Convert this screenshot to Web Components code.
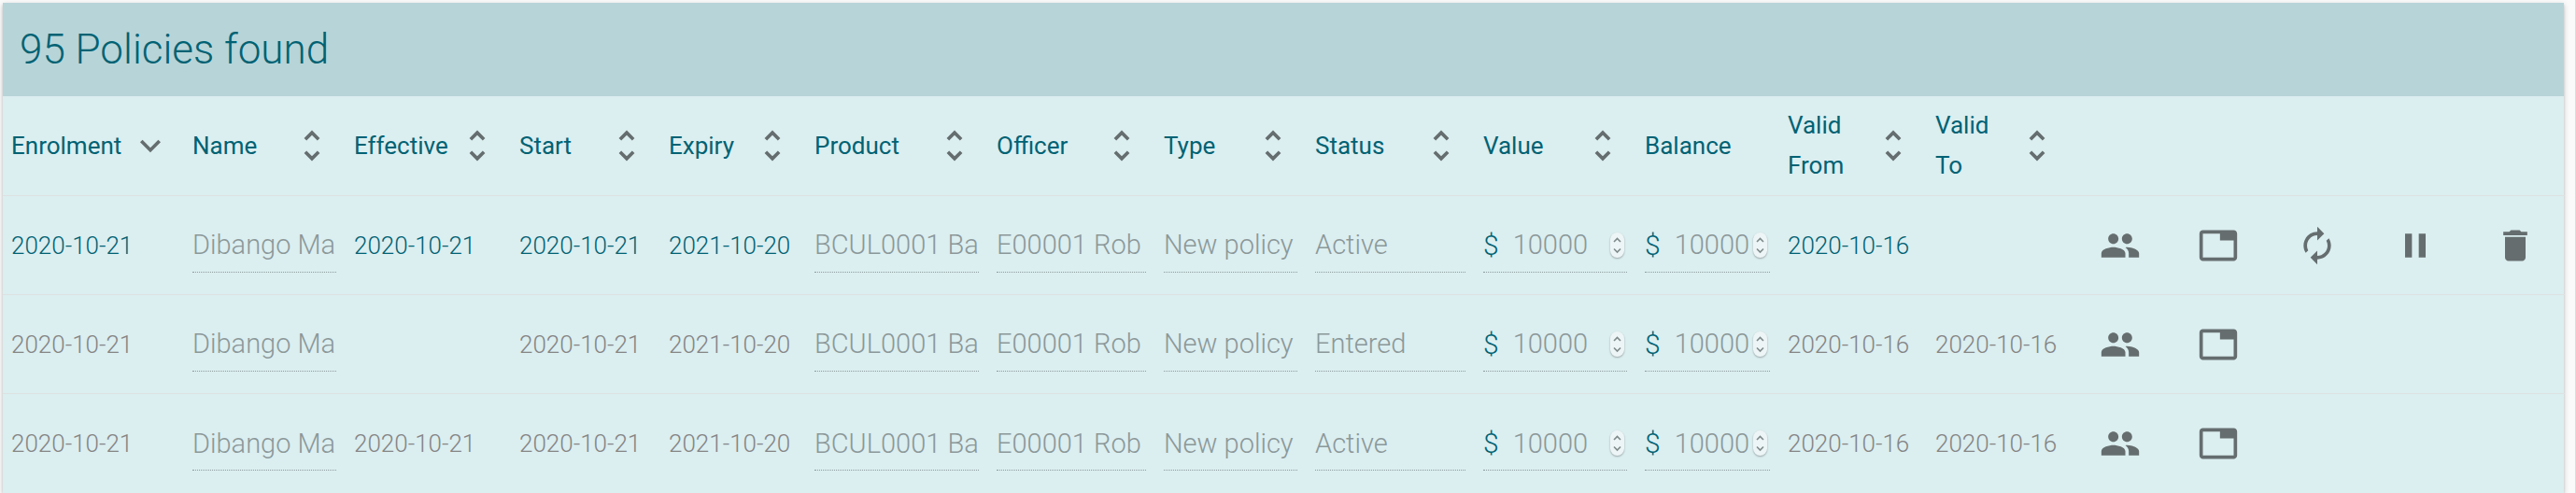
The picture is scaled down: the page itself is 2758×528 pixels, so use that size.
<!DOCTYPE html>
<html lang="en">
<head>
<meta charset="utf-8">
<title>Policies</title>
<style>
  body {
    margin: 0;
    background: #fafafa;
    color: #006273;
    font-family: Roboto, "Liberation Sans", sans-serif;
    font-size: 26px;
    font-weight: 300;
  }
</style>
</head>
<body>
<policies-page>
  <result-panel>
    <span slot="title">95 Policies found</span>
    <policies-table></policies-table>
  </result-panel>
</policies-page>

<template id="policies-page">
  <style>
    :host { display: block; padding: 3px 12px 0 3px; border-right: 1px solid #dcdcdc; }
  </style>
  <slot></slot>
</template>

<template id="result-panel">
  <style>
    :host {
      display: block;
      background: #dbeef0;
      box-shadow: 0 2px 6px rgba(0,0,0,.2), 0 2px 2px rgba(0,0,0,.12);
    }
    header {
      box-sizing: border-box;
      height: 100px;
      padding: 0 18px;
      display: flex;
      align-items: center;
      background: #b7d4d8;
    }
    h1 { margin: 0; font-size: 44px; line-height: 56px; font-weight: 300; }
  </style>
  <header><h1><slot name="title"></slot></h1></header>
  <slot></slot>
</template>

<template id="policies-table">
  <style>
    :host { display: block; }
    table { width: 100%; table-layout: fixed; border-collapse: separate; border-spacing: 0; }
    th, td {
      box-sizing: border-box;
      height: 106px;
      padding: 0 10px 0 9px;
      border-bottom: 1px solid #dde1e1;
      text-align: left;
      vertical-align: middle;
      white-space: nowrap;
    }
    th { height: 107px; font-weight: 400; line-height: 43px; }
    tbody tr:last-child td { border-bottom: 0; }
    tr.expired { color: #858585; }
    td.action { padding: 0; text-align: center; }
  </style>
  <table>
    <colgroup></colgroup>
    <thead><tr></tr></thead>
    <tbody></tbody>
  </table>
</template>

<template id="column-head">
  <style>
    :host { display: flex; align-items: center; justify-content: space-between; }
    span { white-space: normal; }
    span.wrap { width: min-content; }
    button { margin: 0 4px 0 0; padding: 0; border: 0; background: none; display: flex; }
  </style>
  <span><slot></slot></span>
  <button type="button"><md-icon></md-icon></button>
</template>

<template id="text-field">
  <style>
    :host { display: block; }
    input {
      box-sizing: border-box;
      display: block;
      width: 100%;
      height: 58px;
      margin: 0;
      padding: 0;
      border: 0;
      border-bottom: 1px dotted #8f9c9d;
      border-radius: 0;
      background: none;
      color: #8b9899;
      font: inherit;
      font-size: 29px;
    }
  </style>
  <input type="text" disabled>
</template>

<template id="money-field">
  <style>
    :host { display: block; color: #006273; }
    label {
      box-sizing: border-box;
      display: flex;
      align-items: center;
      height: 58px;
      padding-right: 3px;
      border-bottom: 1px dotted #8f9c9d;
    }
    span { margin-right: 15px; font-size: 30px; }
    input {
      flex: 1;
      min-width: 0;
      height: 56px;
      margin: 0;
      padding: 0;
      border: 0;
      background: none;
      color: #8b9899;
      font: inherit;
      font-size: 29px;
      appearance: textfield;
    }
    input::-webkit-inner-spin-button { appearance: none; display: none; }
    svg {
      flex: none;
      width: 15px;
      height: 27px;
      margin-left: 4px;
      border-radius: 8px;
      background: #edf5f6;
      box-shadow: 0 1px 2px rgba(0,0,0,.3);
    }
  </style>
  <label><span>$</span><input type="number" disabled>
    <svg viewBox="0 0 15 27" aria-hidden="true"><path d="M4 10l3.500-3.500L11 10M4 17.500l3.500 3.500L11 17.500" fill="none" stroke="#7f8a8b" stroke-width="1.600"/></svg>
  </label>
</template>

<template id="icon-button">
  <style>
    :host { display: flex; justify-content: center; }
    button { margin: 0; padding: 8px; border: 0; background: none; display: flex; }
  </style>
  <button type="button"><md-icon></md-icon></button>
</template>

<script>
  const ICONS = {
    more: 'M16.59 8.59L12 13.17 7.41 8.59 6 10l6 6 6-6z',
    unfold: 'M12 5.83L15.17 9l1.41-1.41L12 3 7.41 7.59 8.83 9 12 5.83zm0 12.34L8.83 15l-1.41 1.41L12 21l4.59-4.59L15.17 15 12 18.17z',
    people: 'M16 11c1.66 0 2.99-1.34 2.99-3S17.660 5 16 5c-1.660 0-3 1.340-3 3s1.340 3 3 3zm-8 0c1.660 0 2.990-1.340 2.990-3S9.660 5 8 5C6.340 5 5 6.340 5 8s1.340 3 3 3zm0 2c-2.330 0-7 1.170-7 3.500V19h14v-2.500c0-2.330-4.670-3.500-7-3.500zm8 0c-.29 0-.62.02-.97.05 1.160.84 1.970 1.970 1.970 3.450V19h6v-2.500c0-2.330-4.670-3.500-7-3.500z',
    tab: 'M21 3H3c-1.100 0-2 .9-2 2v14c0 1.100.9 2 2 2h18c1.100 0 2-.9 2-2V5c0-1.100-.9-2-2-2zm0 16H3V5h10v4h8v10z',
    renew: 'M12 6v3l4-4-4-4v3c-4.420 0-8 3.580-8 8 0 1.570.46 3.030 1.240 4.260L6.700 14.800c-.45-.83-.7-1.790-.7-2.800 0-3.310 2.690-6 6-6zm6.760 1.740L17.300 9.200c.44.84.7 1.790.7 2.800 0 3.310-2.690 6-6 6v-3l-4 4 4 4v-3c4.420 0 8-3.580 8-8 0-1.570-.46-3.030-1.240-4.260z',
    pause: 'M6 19h4V5H6v14zm8-14v14h4V5h-4z',
    trash: 'M6 19c0 1.100.9 2 2 2h8c1.100 0 2-.9 2-2V7H6v12zM19 4h-3.500l-1-1h-5l-1 1H5v2h14V4z'
  };

  const COLUMNS = [
    ['Enrolment', 194, 'more'], ['Name', 173, 'unfold'], ['Effective', 177, 'unfold'],
    ['Start', 160, 'unfold'], ['Expiry', 156, 'unfold'], ['Product', 195, 'unfold'],
    ['Officer', 179, 'unfold'], ['Type', 162, 'unfold'], ['Status', 180, 'unfold'],
    ['Value', 173, 'unfold'], ['Balance', 153, ''], ['Valid From', 158, 'unfold'],
    ['Valid To', 154, 'unfold'], ['', 105, ''], ['', 106, ''], ['', 105, ''], ['', 106, ''], ['', 107, '']
  ];

  const ROWS = [
    { expired: false, effective: '2020-10-21', status: 'Active', to: '', actions: ['people', 'tab', 'renew', 'pause', 'trash'] },
    { expired: true, effective: '', status: 'Entered', to: '2020-10-16', actions: ['people', 'tab', '', '', ''] },
    { expired: true, effective: '2020-10-21', status: 'Active', to: '2020-10-16', actions: ['people', 'tab', '', '', ''] }
  ];

  const ACTION_LABELS = { people: 'Family', tab: 'Open in new tab', renew: 'Renew', pause: 'Suspend', trash: 'Delete' };

  class TemplateElement extends HTMLElement {
    connectedCallback() {
      if (this.shadowRoot) return;
      this.attachShadow({ mode: 'open' }).append(
        document.getElementById(this.localName).content.cloneNode(true));
      this.render(this.shadowRoot);
    }
    render() {}
  }

  customElements.define('md-icon', class extends HTMLElement {
    connectedCallback() {
      if (this.shadowRoot) return;
      this.attachShadow({ mode: 'open' }).innerHTML =
        `<style>:host{display:block;width:44px;height:44px;flex:none}svg{display:block;width:100%;height:100%;fill:#656d6e}</style>
         <svg viewBox="0 0 24 24" aria-hidden="true"><path d="${ICONS[this.getAttribute('name')] || ''}"/></svg>`;
    }
  });

  customElements.define('column-head', class extends TemplateElement {
    render(root) {
      const icon = this.getAttribute('icon');
      const label = this.textContent;
      root.querySelector('span').classList.toggle('wrap', label.includes(' '));
      const button = root.querySelector('button');
      if (!icon) { button.remove(); return; }
      button.setAttribute('aria-label', 'Sort by ' + label);
      button.innerHTML = `<md-icon name="${icon}"></md-icon>`;
    }
  });

  class FieldElement extends TemplateElement {
    render(root) {
      const input = root.querySelector('input');
      input.value = this.getAttribute('value');
      input.setAttribute('aria-label', this.getAttribute('label'));
    }
  }
  customElements.define('text-field', class extends FieldElement {});
  customElements.define('money-field', class extends FieldElement {});

  customElements.define('icon-button', class extends TemplateElement {
    render(root) {
      const icon = this.getAttribute('icon');
      const button = root.querySelector('button');
      button.setAttribute('aria-label', ACTION_LABELS[icon]);
      button.innerHTML = `<md-icon name="${icon}"></md-icon>`;
    }
  });

  customElements.define('policies-table', class extends TemplateElement {
    render(root) {
      const text = (label, value) => `<td><text-field label="${label}" value="${value}"></text-field></td>`;
      const money = label => `<td><money-field label="${label}" value="10000"></money-field></td>`;
      const date = value => `<td>${value}</td>`;
      root.querySelector('colgroup').innerHTML =
        COLUMNS.map(([, width]) => `<col style="width:${width}px">`).join('');
      root.querySelector('thead tr').innerHTML = COLUMNS.map(([label, , icon]) =>
        label ? `<th scope="col"><column-head icon="${icon}">${label}</column-head></th>` : '<td></td>').join('');
      root.querySelector('tbody').innerHTML = ROWS.map(row =>
        `<tr class="${row.expired ? 'expired' : ''}">` +
        date('2020-10-21') + text('Name', 'Dibango Ma') + date(row.effective) +
        date('2020-10-21') + date('2021-10-20') + text('Product', 'BCUL0001 Ba') +
        text('Officer', 'E00001 Rob') + text('Type', 'New policy') + text('Status', row.status) +
        money('Value') + money('Balance') + date('2020-10-16') + date(row.to) +
        row.actions.map(a => `<td class="action">${a ? `<icon-button icon="${a}"></icon-button>` : ''}</td>`).join('') +
        '</tr>').join('');
    }
  });

  customElements.define('result-panel', class extends TemplateElement {});
  customElements.define('policies-page', class extends TemplateElement {});
</script>
</body>
</html>
